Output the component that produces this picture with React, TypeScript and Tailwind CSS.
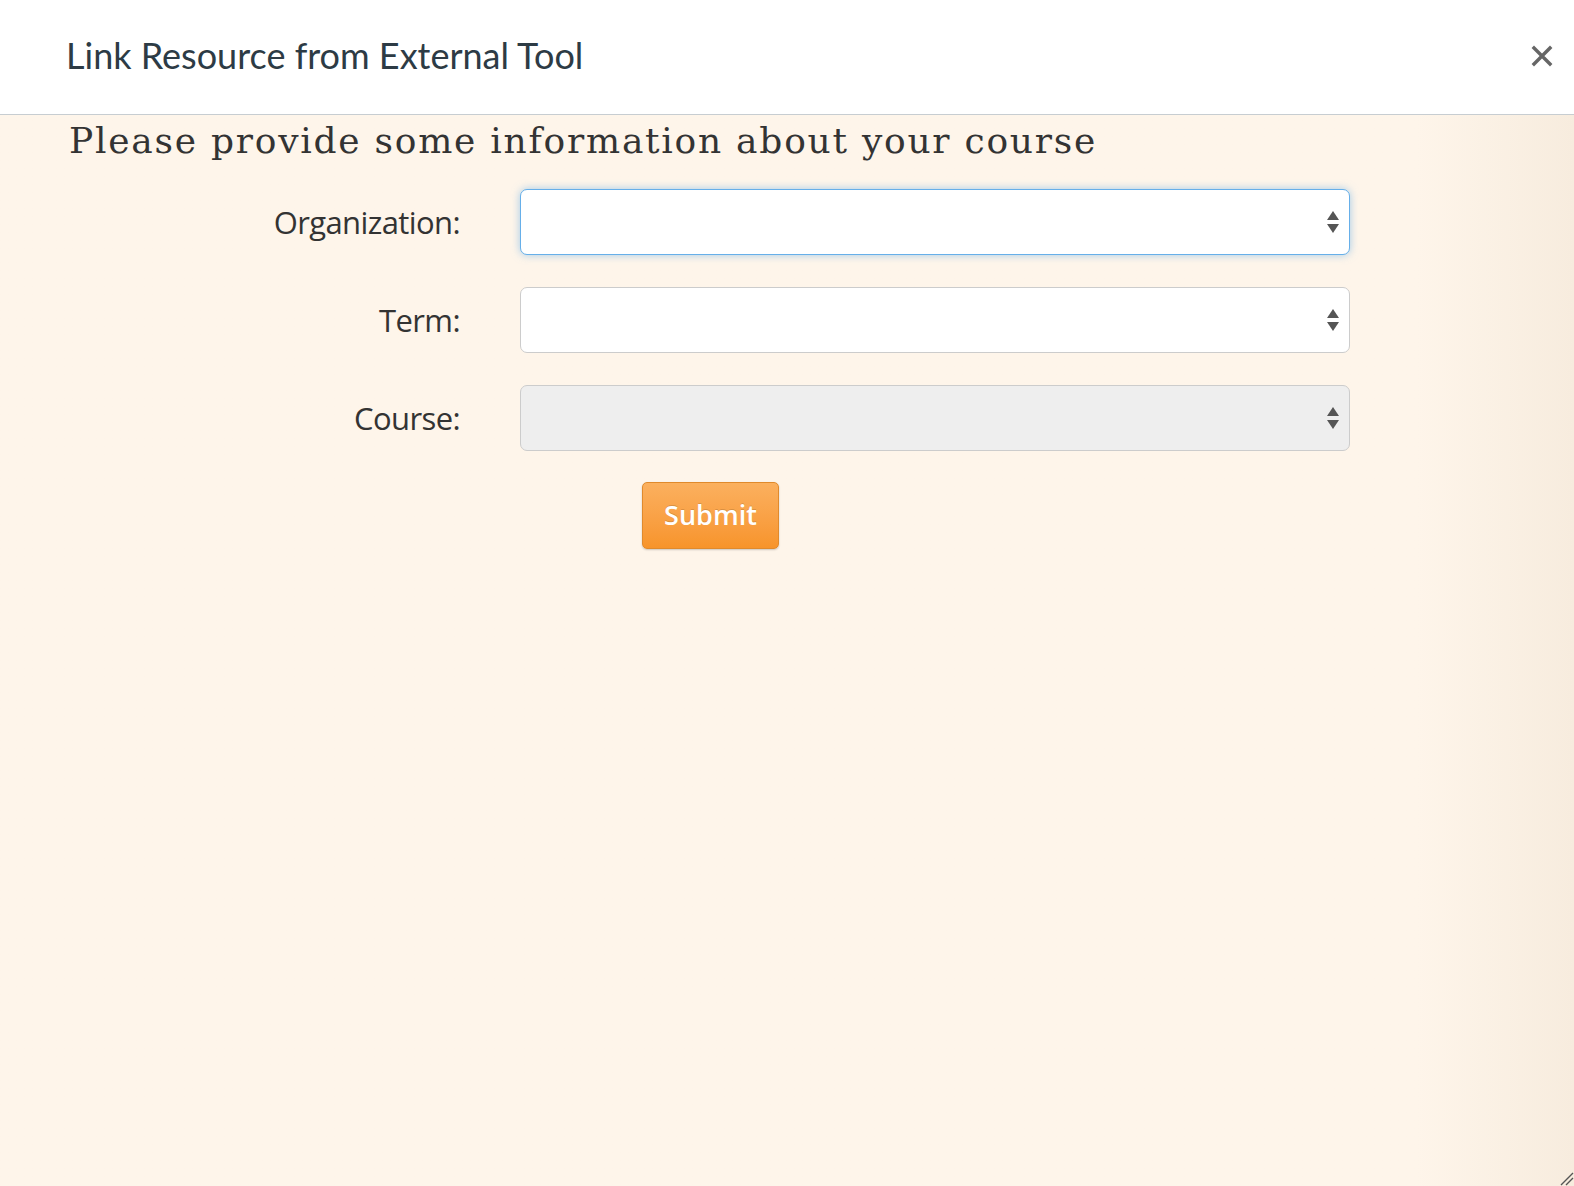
import React from "react"

const fields = [
  { label: "Organization:", focused: true, disabled: false },
  { label: "Term:", focused: false, disabled: false },
  { label: "Course:", focused: false, disabled: true },
]

function Arrows() {
  return (
    <svg width="14" height="26" viewBox="0 0 14 26" className="absolute right-[9px] top-1/2 -translate-y-1/2">
      <path d="M7 2 L13 11 L1 11 Z" fill="#555" />
      <path d="M1 15 L13 15 L7 24 Z" fill="#555" />
    </svg>
  )
}

export default function App() {
  return (
    <div className="h-[1186px] w-[1574px] flex flex-col overflow-hidden bg-white" style={{ fontFamily: "Lato, 'Open Sans', sans-serif" }}>
      {/* Header */}
      <header className="h-[115px] shrink-0 flex items-center justify-between pl-[66px] pr-[21px] border-b border-[#c7cdd1] bg-white">
        <h1 className="text-[36px] text-[#2d3b45] font-normal pb-[5px]">Link Resource from External Tool</h1>
        <button className="text-[#666] pb-[3px]" aria-label="Close">
          <svg width="22" height="22" viewBox="0 0 22 22">
            <path d="M3 3 L19 19 M19 3 L3 19" stroke="#666" strokeWidth="3.4" strokeLinecap="square" />
          </svg>
        </button>
      </header>

      {/* Body */}
      <div className="relative flex-1 bg-gradient-to-r from-[#fef5ea] from-[90%] to-[#f7ecde] pl-[69px]">
        <h2 className="text-[36px] text-[#333] tracking-[1.75px] leading-none pt-[8px]" style={{ fontFamily: "'DejaVu Serif', serif" }}>
          Please provide some information about your course
        </h2>

        <div className="flex flex-col gap-[32px] mt-[30px]">
          {fields.map((f) => (
            <div key={f.label} className="flex items-center">
              <label className="w-[451px] text-right text-[31px] text-[#333] pr-[60px]" style={{ fontFamily: "'Open Sans', sans-serif", letterSpacing: "-0.6px" }}>
                {f.label}
              </label>
              <div
                className={
                  "relative w-[830px] h-[66px] rounded-[7px] border " +
                  (f.focused
                    ? "border-[#66afe9] bg-white shadow-[0_0_8px_rgba(102,175,233,0.6)]"
                    : f.disabled
                    ? "border-[#ccc] bg-[#eeeeee]"
                    : "border-[#ccc] bg-white")
                }
              >
                <Arrows />
              </div>
            </div>
          ))}
        </div>

        <div className="pl-[573px] mt-[31px]">
          <button
            className="w-[137px] h-[67px] rounded-[5px] border border-[#e08a2c] bg-gradient-to-b from-[#fbb05e] to-[#f7942a] text-white text-[27px] font-semibold shadow-[0_1px_2px_rgba(0,0,0,0.2)]"
            style={{ fontFamily: "'Open Sans', sans-serif", textShadow: "0 -1px 0 rgba(0,0,0,0.15)" }}
          >
            Submit
          </button>
        </div>

        {/* resize grip */}
        <svg width="16" height="16" viewBox="0 0 16 16" className="absolute right-0 bottom-0">
          <path d="M15 3 L3 15 M15 8 L8 15" stroke="#555" strokeWidth="1.4" />
        </svg>
      </div>
    </div>
  )
}
